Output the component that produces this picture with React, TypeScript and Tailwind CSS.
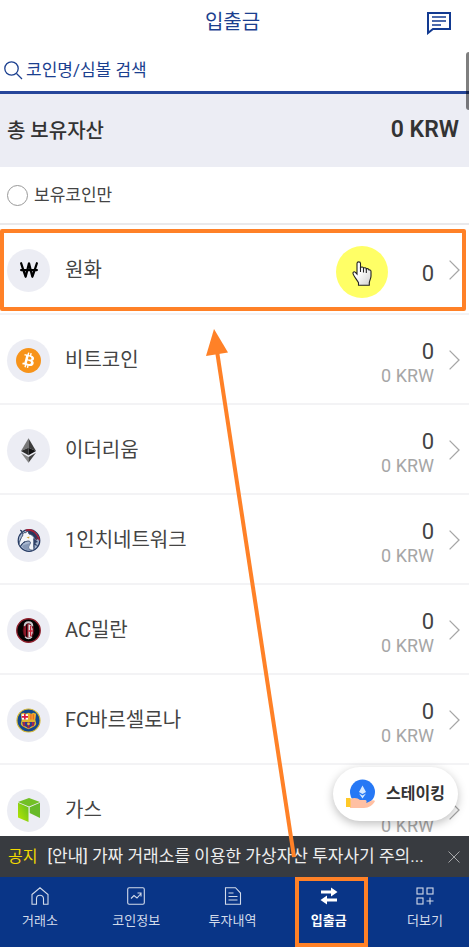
import type { ReactNode } from "react";
import { FaWonSign } from "react-icons/fa6";

const ORANGE = "#ff8127";

function BitcoinIcon() {
  return (
    <svg viewBox="0 0 64 64" className="size-[25px]" aria-hidden="true">
      <circle cx="32" cy="32" r="32" fill="#f7931a" />
      <path
        fill="#fff"
        d="M46.1 27.4c.6-4.3-2.6-6.5-7-8l1.4-5.7-3.5-.9-1.4 5.5c-.9-.2-1.8-.4-2.8-.7l1.4-5.5-3.4-.9-1.5 5.7c-.7-.2-1.5-.3-2.2-.5l-4.8-1.2-.9 3.7s2.6.6 2.5.6c1.4.4 1.7 1.3 1.6 2l-3.9 15.7c-.2.4-.6 1.1-1.6.8 0 .1-2.5-.6-2.5-.6l-1.7 4 4.5 1.1 2.5.6-1.4 5.8 3.4.9 1.5-5.7c.9.2 1.8.5 2.7.7l-1.4 5.7 3.5.9 1.4-5.8c5.9 1.1 10.4.7 12.3-4.7 1.5-4.3-.1-6.8-3.2-8.4 2.3-.5 4-2 4.500-5.100zM38.200 38.500c-1.100 4.300-8.300 2-10.600 1.400l1.900-7.600c2.300.6 9.800 1.700 8.700 6.200zM39.300 27.300c-1 3.900-7 1.900-8.900 1.400l1.700-6.900c2 .5 8.200 1.400 7.200 5.500z"
      />
    </svg>
  );
}

function EthereumIcon() {
  return (
    <svg viewBox="0 0 16 26" className="h-[25px] w-[15px]" aria-hidden="true">
      <path d="M8 0 0 13.500 8 10z" fill="#777" />
      <path d="M8 0 16 13.500 8 10z" fill="#3d3d3d" />
      <path d="M0 13.500 8 10v8z" fill="#2b2b2b" />
      <path d="M16 13.500 8 10v8z" fill="#111" />
      <path d="M0 15.500 8 20v6z" fill="#888" />
      <path d="M16 15.500 8 20v6z" fill="#444" />
    </svg>
  );
}

function OneInchIcon() {
  return (
    <svg viewBox="0 0 24 24" className="size-6" aria-hidden="true">
      <circle cx="12" cy="12.500" r="10.800" fill="#a9b8d0" stroke="#253a63" strokeWidth="1.200" />
      <path d="M8 2c4-2 9-.5 11 3 2 2 4 4 4 8l-2-2-2 1-3-5-6-3z" fill="#a91f36" />
      <path d="M10 3c5-1 10 3 12 10l-3-4 1 4-4-5-5-3z" fill="#28385f" />
      <path d="M3.500 2 8 5l3-2 1 3c4 1 6 4 6 7 0 4-2 5-1 9-5 1-7-2-4-6 1-2 0-3-2-3l-4 1-3 4-2-1c0-3 2-7 4-10z" fill="#f4f6fa" stroke="#314569" strokeWidth=".9" />
      <path d="M5 18c2 4 6 5 9 5-4-3-2-6 0-8-3 1-6 1-9 3z" fill="#8698b6" />
      <path d="m16 10 5 4-3 1 3 3-4-1 1 4c-3-3-1-6-2-11z" fill="#304368" />
      <path d="m9.500 9.500 3-1-.5 2z" fill="#d3a733" />
      <path d="m3.500 2 3 4" stroke="#263b62" />
      <path d="M4 17c1-1 2-3 4-3" stroke="#263b62" fill="none" />
    </svg>
  );
}

function MilanIcon() {
  return (
    <svg viewBox="0 0 26 26" className="size-[25px]" aria-hidden="true">
      <circle cx="13" cy="13" r="12.200" fill="#050303" stroke="#8f1f2c" strokeWidth="1.400" />
      <ellipse cx="13" cy="13" rx="6" ry="9" fill="#5b0d18" />
      <path d="M9 8.500C9 3 17 3 17 8.500" stroke="#c9c9cd" strokeWidth="2" fill="none" />
      <ellipse cx="12.500" cy="13.500" rx="4.500" ry="7" fill="#8d1828" />
      <path d="M11 7v13" stroke="#1a0508" strokeWidth="1.200" />
      <path d="M13 6.500c6 1 6 13 0 14z" fill="#e4e4e6" />
      <path d="M15.200 8v11M13 13.500h4.500" stroke="#cf2338" strokeWidth="1.400" />
      <path d="M9.500 19.500c2 2.500 5 2.500 7 0" stroke="#c9c9cd" strokeWidth="1.500" fill="none" />
    </svg>
  );
}

function BarcelonaIcon() {
  return (
    <svg viewBox="0 0 26 26" className="size-[25px]" aria-hidden="true">
      <circle cx="13" cy="13" r="12" fill="#14488d" stroke="#d7b936" strokeWidth="1.200" />
      <path d="m5 6 3-1 2 1 3-1 3 1 2-1 3 1-1 6 1 4c0 3-4 4-8 6-4-2-8-3-8-6l1-4z" fill="#e2b52f" />
      <path d="M6 6.500h6.500V12H6z" fill="#fff" />
      <path d="M9.200 6v6M6 9.200h6.500" stroke="#db1740" strokeWidth="1.700" />
      <path d="M13.500 6.500H20V12h-6.500z" fill="#f7a72a" />
      <path d="M15.500 6.500V12M18 6.500V12" stroke="#e65b29" strokeWidth="1" />
      <path d="M6.500 14.500h13l-.5 3-6 3.500-6-3.500z" fill="#263f91" />
      <path d="M8.500 14.500V19M13 14.500V21M17.500 14.500V19" stroke="#a82152" strokeWidth="2" />
      <circle cx="13" cy="16.500" r="1.500" fill="#e6ba35" />
    </svg>
  );
}

function GasIcon() {
  return (
    <svg viewBox="0 0 24 26" className="h-[26px] w-6" aria-hidden="true">
      <defs>
        <linearGradient id="gas" x1="1" y1="0" x2="0" y2="1">
          <stop offset="0" stopColor="#63bd22" />
          <stop offset="1" stopColor="#b9e800" />
        </linearGradient>
      </defs>
      <path d="M1 5 12 1l11 4-11 4.500z" fill="#72c025" />
      <path d="m1 5.800 10.500 4.500V25L1 20.500z" fill="url(#gas)" />
      <path d="m12.700 10.300 10.300-4.500V21l-10.300-5z" fill="#67b929" />
    </svg>
  );
}

function WonIcon() {
  return <FaWonSign className="size-[18px] text-black" aria-hidden="true" />;
}

type Coin = { name: string; icon: ReactNode; krw?: string };

const coins: Coin[] = [
  { name: "원화", icon: <WonIcon /> },
  { name: "비트코인", icon: <BitcoinIcon />, krw: "0 KRW" },
  { name: "이더리움", icon: <EthereumIcon />, krw: "0 KRW" },
  { name: "1인치네트워크", icon: <OneInchIcon />, krw: "0 KRW" },
  { name: "AC밀란", icon: <MilanIcon />, krw: "0 KRW" },
  { name: "FC바르셀로나", icon: <BarcelonaIcon />, krw: "0 KRW" },
  { name: "가스", icon: <GasIcon />, krw: "0 KRW" },
];

function Chevron() {
  return (
    <svg viewBox="0 0 11 20" className="h-5 w-[11px]" fill="none" stroke="#a6a6a6" strokeWidth="1.300" aria-hidden="true">
      <path d="m.6.6 9.400 9.400L.6 19.400" />
    </svg>
  );
}

function Pointer() {
  return (
    <span className="absolute top-[21px] right-[81px] flex size-[52px] items-center justify-center rounded-full bg-[#ffff66]">
      <svg viewBox="0 0 20 25" className="mt-0.5 h-[25px] w-5" aria-hidden="true">
        <defs>
          <linearGradient id="hand" x1="0" y1="0" x2="1" y2="1">
            <stop offset=".4" stopColor="#fff" />
            <stop offset="1" stopColor="#cfcfcf" />
          </linearGradient>
        </defs>
        <path
          d="M5 2.500C5 .3 8.500.3 8.500 2.500v4c1-.9 2.700-.5 3 .6 1-.7 2.500-.3 2.800.8 1.200-.6 2.300 0 2.600 1 1.200-.3 2.100.4 2.100 1.500v4.500c0 2.500-1.500 4.500-1.700 7v2.300H6.500v-2.400C5.500 19.500 1.500 15 1 12.500c-.3-1.700 1.300-2.200 2.400-1.200L5 13z"
          fill="url(#hand)"
          stroke="#222"
          strokeWidth="1.100"
        />
        <path d="M8.500 6v5M11.500 7v4.500M14.300 8v4" stroke="#222" strokeWidth="1.100" />
      </svg>
    </span>
  );
}

function CoinRow({ coin, selected }: { coin: Coin; selected: boolean }) {
  return (
    <li className="relative h-[90px] border-b-2 border-[#f3f3f5]">
      <button type="button" className="flex h-full w-full items-center pt-0.5 pr-[9px] pl-[7px] text-left">
        <span className="flex size-[43px] shrink-0 items-center justify-center rounded-full bg-[#ecedf4]">{coin.icon}</span>
        <span className="ml-[15px] flex-1 text-xl text-[#444]">{coin.name}</span>
        <span className="flex flex-col pt-2 text-right">
          <span className="text-[22px] leading-6 text-[#444]">0</span>
          {coin.krw && <span className="text-lg leading-6 text-[#a6a6a6]">{coin.krw}</span>}
        </span>
        <span className="ml-[15px]">
          <Chevron />
        </span>
      </button>
      {selected && (
        <>
          <Pointer />
          <span className="pointer-events-none absolute top-1 right-[3px] bottom-0.5 left-0 rounded-xs border-4 border-[#ff8127]" />
        </>
      )}
    </li>
  );
}

const tabs: { label: string; icon: ReactNode; active?: boolean }[] = [
  {
    label: "거래소",
    icon: <path d="M1 7.500 9 .8l8 6.700v9.700h-4.500v-5.500a3.500 3.500 0 0 0-7 0v5.500H1z" />,
  },
  {
    label: "코인정보",
    icon: (
      <>
        <rect x=".7" y=".7" width="16.600" height="16.600" rx="1.500" />
        <path d="m4 11.500 3-3 3 2.500 4-4.500M10.500 6H14v3.500" />
      </>
    ),
  },
  {
    label: "투자내역",
    icon: <path d="M1.500.7h10L16.500 6v11.300h-15zM4.500 6h5M4.500 9.500h9M4.500 13h9" />,
  },
  {
    label: "입출금",
    active: true,
    icon: (
      <path d="M1 3.500h10V.5L17.500 5 11 9.500v-3H1zM17 11.500H7v-3L.5 13 7 17.500v-3h10z" fill="currentColor" stroke="none" />
    ),
  },
  {
    label: "더보기",
    icon: (
      <>
        <rect x="1" y="1" width="6" height="6" />
        <rect x="11" y="1" width="6" height="6" />
        <rect x="1" y="11" width="6" height="6" />
        <path d="M14 10.500v7M10.500 14h7" />
      </>
    ),
  },
];

export default function App() {
  return (
    <div className="relative flex h-screen flex-col overflow-hidden bg-white font-[Roboto,'Noto_Sans_CJK_KR',sans-serif]">
      <header className="relative flex h-[42px] shrink-0 items-center justify-center pt-0.5 pr-1 text-[#1b3f8f]">
        <h1 className="text-xl">입출금</h1>
        <button type="button" aria-label="메시지" className="absolute top-[11px] right-[17px]">
          <svg viewBox="0 0 26 24" className="h-6 w-[26px]" fill="none" stroke="#123a91" strokeWidth="2" aria-hidden="true">
            <path d="M2 2h22v16H7l-5 4z" />
            <path d="M6 6h14M6 10h14M6 14h9" strokeWidth="1.700" />
          </svg>
        </button>
      </header>

      <label className="flex h-[52px] shrink-0 items-center gap-[3px] border-b-3 border-[#26469a] pt-2 pl-1">
        <svg viewBox="0 0 19 19" className="size-[19px] shrink-0" fill="none" stroke="#1b3f8f" strokeWidth="1.300" aria-hidden="true">
          <circle cx="7.500" cy="7.500" r="6.700" />
          <path d="m12.500 12.500 5.500 5.500" />
        </svg>
        <input
          type="text"
          aria-label="코인명/심볼 검색"
          placeholder="코인명/심볼 검색"
          className="min-w-0 flex-1 text-[17px] outline-none placeholder:text-[#1b3f8f]"
        />
      </label>

      <section className="flex h-[73px] shrink-0 items-center justify-between bg-[#ecedf4] pr-2.5 pl-[7px] text-[#333]">
        <h2 className="text-xl font-medium">총 보유자산</h2>
        <strong className="text-[23px] font-semibold">0 KRW</strong>
      </section>

      <label className="flex h-[58px] shrink-0 items-center gap-1.5 border-b-2 border-[#e9e9ec] pl-[7px] text-[17px] text-[#444]">
        <input type="checkbox" className="size-[21px] appearance-none rounded-full border border-[#999] checked:bg-[#1b3f8f]" />
        <span className="pt-0.5">보유코인만</span>
      </label>

      <main className="relative min-h-0 flex-1 overflow-hidden">
        <ul>
          {coins.map((coin, i) => (
            <CoinRow key={coin.name} coin={coin} selected={i === 0} />
          ))}
        </ul>
        <button
          type="button"
          className="absolute right-[11px] bottom-[15px] flex h-[54px] w-[125px] items-center gap-[11px] rounded-full bg-white pl-3 text-base font-bold text-[#333] shadow-[0_3px_10px_rgba(0,0,0,0.25)]"
        >
          <svg viewBox="0 0 30 30" className="size-[30px]" aria-hidden="true">
            <circle cx="17.500" cy="13" r="12.500" fill="#2678f5" />
            <path d="m17.500 6.500 3.500 6.500-3.500 2-3.500-2zM14 14.500l3.500 2 3.500-2-3.500 5z" fill="#d6e9ff" />
            <path d="M5 20c4-2 8-1 10 1h5c2 0 2 2 1 3 4-1 7-4 9-2-2 4-6 7-11 7H5z" fill="#ffc0a3" />
            <path d="M1 19h4.500v9H1z" fill="#ffc928" />
          </svg>
          스테이킹
        </button>
      </main>

      <aside className="flex h-[41px] shrink-0 items-center bg-[#383b40] pr-[9px] pl-2 text-[#eee]">
        <span className="mr-2.5 shrink-0 text-base text-[#f2d900]">공지</span>
        <a href="#notice" className="min-w-0 flex-1 truncate text-[17px]">
          [안내] 가짜 거래소를 이용한 가상자산 투자사기 주의...
        </a>
        <button type="button" aria-label="닫기">
          <svg viewBox="0 0 12 12" className="size-3" stroke="#a5a6a8" aria-hidden="true">
            <path d="m.5.5 11 11M11.500.5l-11 11" />
          </svg>
        </button>
      </aside>

      <nav className="flex h-[70px] shrink-0 justify-between bg-[#093587] pr-2.5 pl-1.5">
        {tabs.map((tab) => (
          <a
            key={tab.label}
            href="#tab"
            className={
              tab.active
                ? "relative flex w-[68px] flex-col items-center gap-1.5 pt-2.5 text-[13px] leading-5 font-bold text-white"
                : "relative flex w-[68px] flex-col items-center gap-1.5 pt-2.5 text-[13px] leading-5 text-[#d3dbea]"
            }
          >
            <svg viewBox="0 0 18 18" className="size-[18px]" fill="none" stroke="currentColor" strokeWidth="1.100" aria-hidden="true">
              {tab.icon}
            </svg>
            {tab.label}
            {tab.active && <span className="absolute inset-y-0 -right-[5px] left-0 border-4 border-[#ff8127]" />}
          </a>
        ))}
      </nav>

      <span className="absolute top-[52px] right-0 h-[58px] w-[3px] rounded-l-sm bg-black/50" />

      <svg viewBox="0 0 94 530" className="pointer-events-none absolute top-[329px] left-[205px] h-[530px] w-[94px]" aria-hidden="true">
        <path d="M12 22 89 528" stroke={ORANGE} strokeWidth="4" />
        <path d="M9 0 23 23.500 1 27z" fill={ORANGE} />
      </svg>
    </div>
  );
}
